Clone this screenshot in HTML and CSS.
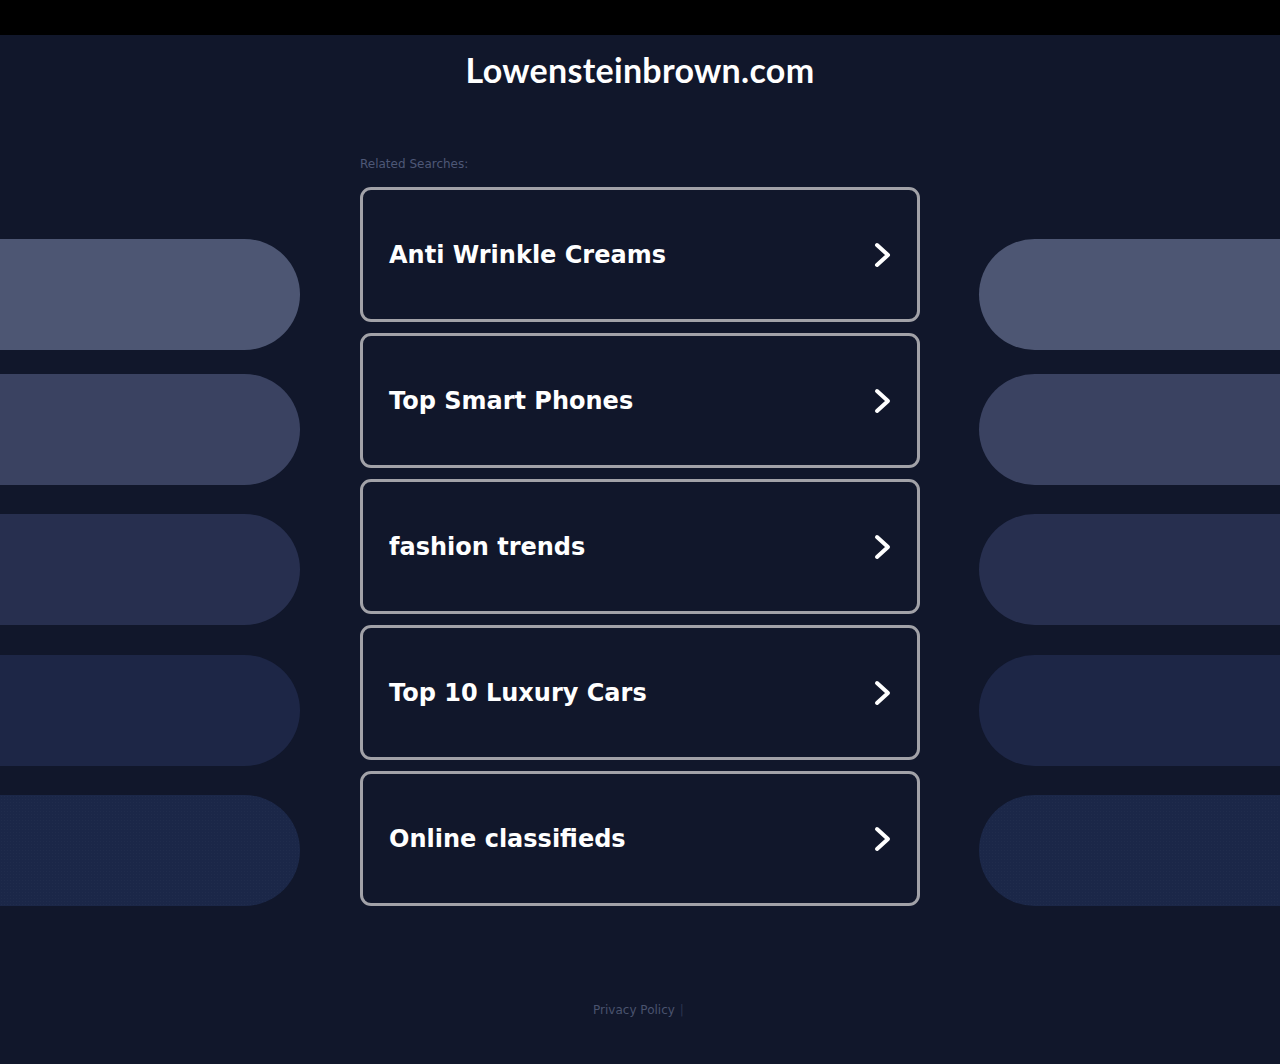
FILE: index.html
```html
<!DOCTYPE html>
<html>
<head>
<meta charset="utf-8">
<link rel="stylesheet" href="styles.css">
</head>
<body>
<div class="topbar"></div>
<header class="header"><h1 class="title">Lowensteinbrown.com</h1></header>
<div class="layout">
  <div class="side side-left">
    <div class="pill p1"></div>
    <div class="pill p2"></div>
    <div class="pill p3"></div>
    <div class="pill p4"></div>
    <div class="pill p5"></div>
  </div>
  <main class="center">
    <div class="related">Related Searches:</div>
    <ul class="cards">
      <li class="card"><span class="card-text">Anti Wrinkle Creams</span><svg class="chev" viewBox="0 0 20 28"><polyline points="4,4 15,14 4,24"/></svg></li>
      <li class="card"><span class="card-text">Top Smart Phones</span><svg class="chev" viewBox="0 0 20 28"><polyline points="4,4 15,14 4,24"/></svg></li>
      <li class="card"><span class="card-text">fashion trends</span><svg class="chev" viewBox="0 0 20 28"><polyline points="4,4 15,14 4,24"/></svg></li>
      <li class="card"><span class="card-text">Top 10 Luxury Cars</span><svg class="chev" viewBox="0 0 20 28"><polyline points="4,4 15,14 4,24"/></svg></li>
      <li class="card"><span class="card-text">Online classifieds</span><svg class="chev" viewBox="0 0 20 28"><polyline points="4,4 15,14 4,24"/></svg></li>
    </ul>
  </main>
  <div class="side side-right">
    <div class="pill p1"></div>
    <div class="pill p2"></div>
    <div class="pill p3"></div>
    <div class="pill p4"></div>
    <div class="pill p5"></div>
  </div>
</div>
<footer class="footer"><span class="privacy">Privacy Policy</span><span class="sep">|</span></footer>
</body>
</html>
```
FILE: styles.css
```css
html, body {
  margin: 0;
  padding: 0;
}
body {
  background: #11172b;
  font-family: "DejaVu Sans", sans-serif;
  height: 1064px;
  overflow: hidden;
}
.topbar {
  height: 35px;
  background: #000;
}
.header {
  box-sizing: border-box;
  height: 72px;
  padding-bottom: 4px;
  display: flex;
  justify-content: center;
  align-items: center;
}
.title {
  margin: 0;
  font-family: "Lato", sans-serif;
  font-weight: 700;
  font-size: 34px;
  color: #fff;
  letter-spacing: 0.3px;
}
.layout {
  display: flex;
  align-items: flex-start;
}
.side {
  display: flex;
  flex-direction: column;
  padding-top: 132px;
}
.side-left {
  width: 300px;
}
.side-right {
  flex: 1;
  margin-left: 59px;
}
.pill {
  height: 111px;
  margin-top: 29px;
}
.pill.p1 { margin-top: 0; background: #4d5673; }
.pill.p2 { margin-top: 24px; background: #3a4261; }
.pill.p3 { background: #272f4f; }
.pill.p4 { margin-top: 30px; background: #1d2646; }
.pill.p5 {
  background-color: #1b2748;
  background-image: radial-gradient(circle, rgba(255,255,255,0.025) 1px, transparent 1px);
  background-size: 3px 3px;
}
.side-left .pill { border-radius: 0 56px 56px 0; }
.side-right .pill { border-radius: 56px 0 0 56px; }
.center {
  width: 560px;
  margin-left: 60px;
}
.related {
  font-size: 12px;
  color: #4e5877;
  margin-top: 50px;
  height: 14px;
  line-height: 14px;
}
.cards {
  list-style: none;
  margin: 16px 0 0;
  padding: 0;
  display: flex;
  flex-direction: column;
  gap: 11px;
}
.card {
  box-sizing: border-box;
  height: 135px;
  border: 3px solid #a2a2a8;
  border-radius: 11px;
  display: flex;
  align-items: center;
  justify-content: space-between;
  padding: 0 24px 0 26px;
}
.card-text {
  color: #fff;
  font-weight: 700;
  font-size: 24px;
}
.chev {
  width: 20px;
  height: 28px;
  fill: none;
  stroke: #fff;
  stroke-width: 4;
  stroke-linecap: round;
  stroke-linejoin: round;
}
.footer {
  position: absolute;
  left: 0;
  right: 0;
  top: 1003px;
  text-align: center;
  font-size: 12px;
  color: #4a536e;
  padding-right: 3px;
}
.sep {
  color: #2c3450;
  margin-left: 5px;
}
```
